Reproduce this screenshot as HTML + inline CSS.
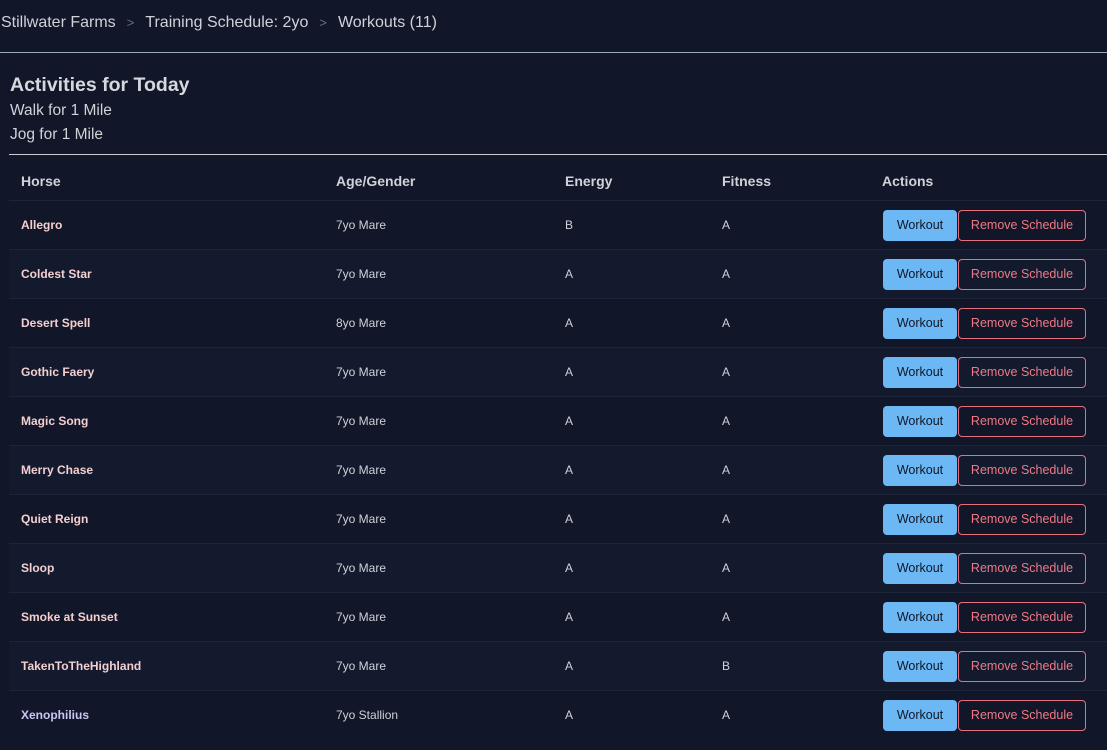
<!DOCTYPE html><html><head><style>
body{margin:0;background:#111628;font-family:"Liberation Sans",sans-serif;color:#d4d6dc;width:1107px;height:750px;overflow:hidden}
.bc{position:absolute;top:14px;left:1px;font-size:16px;color:#cfd2d9}
.bc span.s{color:#6b7080;margin:0 11px;font-size:13px}
.hr1{position:absolute;top:52px;left:0;width:1107px;height:1px;background:#9aa9c2}
h2{position:absolute;top:74px;left:10px;margin:0;font-size:19.5px;font-weight:bold;color:#d6d8de}
.l{position:absolute;left:10px;font-size:15.5px;color:#d0d2d8}
.hr2{position:absolute;top:154px;left:9px;width:1098px;height:1px;background:#c9ccd3}
table{position:absolute;top:162px;left:9px;width:1098px;border-collapse:collapse;font-size:12px}
th{text-align:left;font-size:14px;font-weight:bold;color:#cfd2d8;height:38px;padding:0 0 0 12px;border-bottom:1px solid #1f2538}
td{height:48px;padding:0 0 0 12px;border-bottom:1px solid #1f2538;color:#cfd2d8}
tr:last-child td{border-bottom:none}
tr:nth-child(odd) td{background:#131a2d}
td.n{color:#f4cfcf;font-weight:bold}
td.x{color:#c9c7f5;font-weight:bold}
.w{display:inline-block;background:#6cb8f5;color:#0f1626;border-radius:4px;width:74px;height:31px;line-height:31px;text-align:center;font-size:12.5px;vertical-align:middle;margin-left:1px}
.r{display:inline-block;border:1px solid #e66f7d;color:#ef7a86;border-radius:4px;width:126px;height:29px;line-height:29px;text-align:center;font-size:12.5px;margin-left:1px;vertical-align:middle}
</style></head><body>
<div class="bc">Stillwater Farms<span class="s">&gt;</span>Training Schedule: 2yo<span class="s">&gt;</span>Workouts (11)</div>
<div class="hr1"></div>
<h2>Activities for Today</h2>
<div class="l" style="top:102px">Walk for 1 Mile</div>
<div class="l" style="top:126px">Jog for 1 Mile</div>
<div class="hr2"></div>
<table>
<tr><th style="width:303px">Horse</th><th style="width:217px">Age/Gender</th><th style="width:145px">Energy</th><th style="width:148px">Fitness</th><th>Actions</th></tr>
<tr><td class="n">Allegro</td><td>7yo Mare</td><td>B</td><td>A</td><td><span class="w">Workout</span><span class="r">Remove Schedule</span></td></tr>
<tr><td class="n">Coldest Star</td><td>7yo Mare</td><td>A</td><td>A</td><td><span class="w">Workout</span><span class="r">Remove Schedule</span></td></tr>
<tr><td class="n">Desert Spell</td><td>8yo Mare</td><td>A</td><td>A</td><td><span class="w">Workout</span><span class="r">Remove Schedule</span></td></tr>
<tr><td class="n">Gothic Faery</td><td>7yo Mare</td><td>A</td><td>A</td><td><span class="w">Workout</span><span class="r">Remove Schedule</span></td></tr>
<tr><td class="n">Magic Song</td><td>7yo Mare</td><td>A</td><td>A</td><td><span class="w">Workout</span><span class="r">Remove Schedule</span></td></tr>
<tr><td class="n">Merry Chase</td><td>7yo Mare</td><td>A</td><td>A</td><td><span class="w">Workout</span><span class="r">Remove Schedule</span></td></tr>
<tr><td class="n">Quiet Reign</td><td>7yo Mare</td><td>A</td><td>A</td><td><span class="w">Workout</span><span class="r">Remove Schedule</span></td></tr>
<tr><td class="n">Sloop</td><td>7yo Mare</td><td>A</td><td>A</td><td><span class="w">Workout</span><span class="r">Remove Schedule</span></td></tr>
<tr><td class="n">Smoke at Sunset</td><td>7yo Mare</td><td>A</td><td>A</td><td><span class="w">Workout</span><span class="r">Remove Schedule</span></td></tr>
<tr><td class="n">TakenToTheHighland</td><td>7yo Mare</td><td>A</td><td>B</td><td><span class="w">Workout</span><span class="r">Remove Schedule</span></td></tr>
<tr><td class="x">Xenophilius</td><td>7yo Stallion</td><td>A</td><td>A</td><td><span class="w">Workout</span><span class="r">Remove Schedule</span></td></tr>
</table>
</body></html>
